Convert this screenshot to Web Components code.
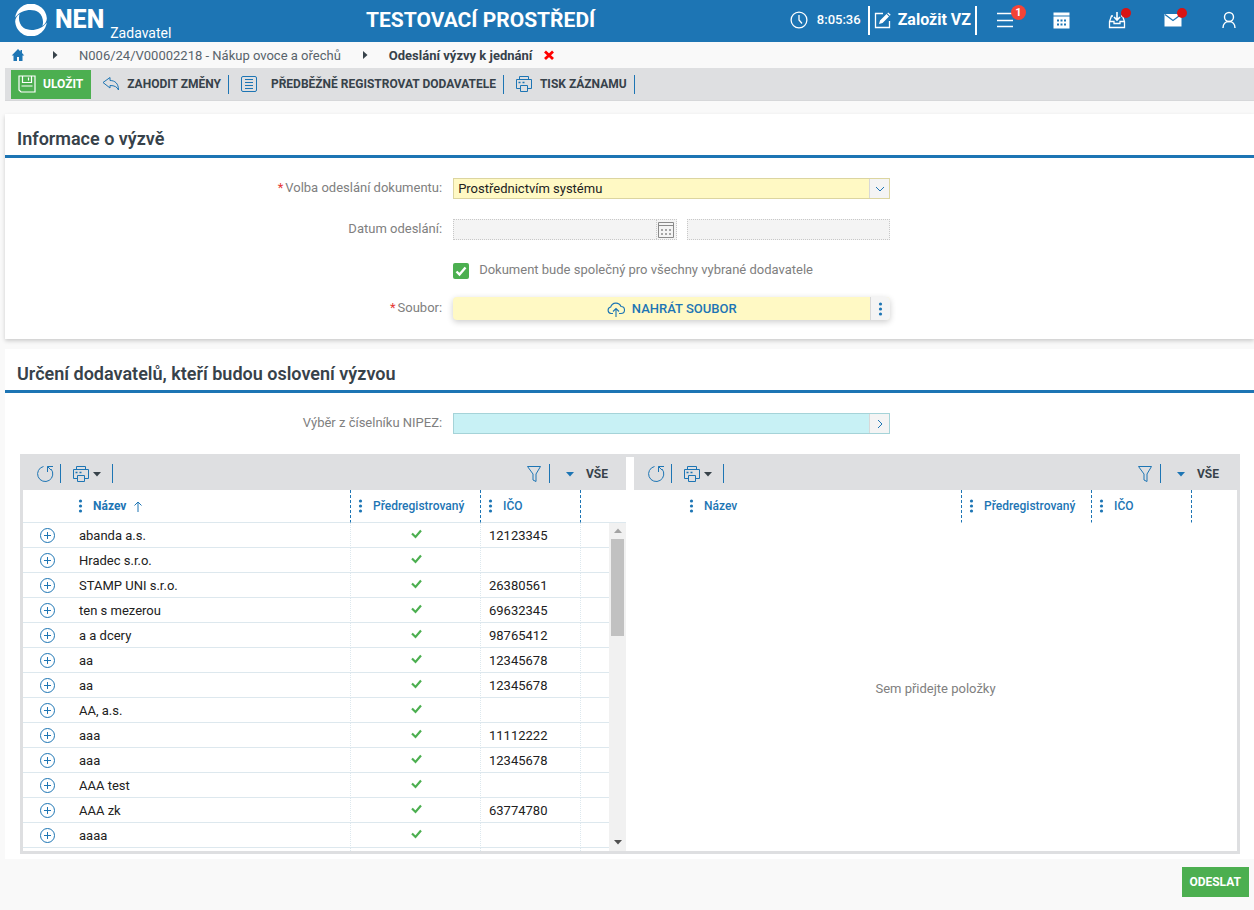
<!DOCTYPE html>
<html lang="cs">
<head>
<meta charset="utf-8">
<title>NEN – Odeslání výzvy k jednání</title>
<style>
  :root {
    --blue: #1d75b4;
    --dark: #37424a;
    --grey: #dedfe1;
    --label: #808080;
    --green: #4caf50;
  }
  body { margin: 0; background: #f9f9f9; font-family: Roboto, "Liberation Sans", sans-serif; font-size: 13px; line-height: 16px; color: var(--dark); }
</style>
</head>
<body>
<nen-app></nen-app>
<script>
const ICONS = {
  logo: [32, '<path id="c" fill="currentColor" d="M31.800 18.500A15.900 15.900 0 0 1 .2 18C0 15 1.500 12 4.600 10C3.200 14 4 20.500 8.500 23.800C14 27.500 25.500 27 31.800 18.500Z"/><path fill="currentColor" transform="rotate(180 16 16)" d="M31.800 18.500A15.900 15.900 0 0 1 .2 18C0 15 1.500 12 4.600 10C3.200 14 4 20.500 8.500 23.800C14 27.500 25.500 27 31.800 18.500Z"/>'],
  clock: [18, '<g fill="none" stroke="currentColor" stroke-width="1.300"><circle cx="9" cy="9" r="7.900"/><path d="M9 4v5l3 3.500"/></g>'],
  edit: [17, '<path d="M9 1.500H1.500v14h14V9" fill="none" stroke="currentColor" stroke-width="1.300"/><path fill="currentColor" d="M5 12l1-3.500L12.500 2 15 4.500 8.500 11zM13.200 1.300l1-.9 2.500 2.400-1 1z"/>'],
  menu: [18, '<path d="M1 2.500h16M1 9.500h16M1 15.500h16" fill="none" stroke="currentColor" stroke-width="1.500"/>'],
  calendar: [17, '<path fill="currentColor" d="M.5.500h16v3H.5z"/><path fill="currentColor" fill-rule="evenodd" d="M.5 4.500h16v12H.5zM4 7.500v2h2v-2zM7.500 7.500v2h2v-2zM11 7.500v2h2v-2zM4 11.500v2h2v-2zM7.500 11.500v2h2v-2zM11 11.500v2h2v-2z"/>'],
  inbox: [18, '<g fill="none" stroke="currentColor" stroke-width="1.300"><path d="M5 5H3.500L1.500 10.500v6h15v-6L14.500 5H13M1.500 10.500H6v2h6v-2h4.500"/><path d="M9 1v7.500M6 6l3 3 3-3" stroke-width="1.600"/></g>'],
  mail: [18, '<path fill="currentColor" d="M.5 3h17v12.500H.5z"/><path d="M1 3.500l8 6 8-6" fill="none" stroke="#1d75b4" stroke-width="1.200"/>'],
  user: [18, '<g fill="none" stroke="currentColor" stroke-width="1.400"><circle cx="9" cy="6" r="4.500"/><path d="M3 17c0-4 2.500-6.500 6-6.500s6 2.500 6 6.500"/></g>'],
  home: [14, '<path fill="currentColor" d="M7 1L.7 7.500h1.800V13H6V9h2v4h3.500V7.500h1.800L11 5V2H9.500v1.500z"/>'],
  right: [10, '<path fill="currentColor" d="M3 1l4.500 4L3 9z"/>'],
  close: [12, '<path d="M2 2.500l8 7.500M10 2.500L2 10" stroke="currentColor" stroke-width="2.800" fill="none"/>'],
  save: [18, '<g fill="none" stroke="currentColor" stroke-width="1.200"><path d="M1 1h16v16H3l-2-2zM4.500 1v6.500h9V1M10.500 2.500v3M3.500 11h11" /></g>'],
  back: [18, '<path d="M1 7.500L8 2.500v3c5 0 8.500 3 8.500 9.500-1.500-3.200-4-4.500-8.500-4.500V13z" fill="none" stroke="currentColor" stroke-linejoin="round"/>'],
  list: [18, '<g fill="none" stroke="currentColor"><rect x="1.500" y="1.500" width="15" height="15" rx="1.500"/><path d="M5 4.500h8M5 7.500h8M5 10.500h8M5 13.500h8"/></g>'],
  print: [18, '<g fill="none" stroke="currentColor"><path d="M4.500 4.500v-3h9v3M5 13.500H1.500v-9h15v9H13"/><path d="M5.500 10.500h7v6h-7z"/><path d="M3.500 7.500h2M7.500 7.500h2" stroke-width="1.500"/></g>'],
  cloud: [18, '<g fill="none" stroke="currentColor" stroke-width="1.100"><path d="M6 13.500H4a3.300 3.300 0 0 1-.3-6.500A5.500 5.500 0 0 1 14 6.500a3.500 3.500 0 0 1 0 7h-2M9 17V8.500M6 11.500l3-3 3 3"/></g>'],
  dots: [16, '<g fill="currentColor"><circle cx="7.500" cy="3" r="1.600"/><circle cx="7.500" cy="8" r="1.600"/><circle cx="7.500" cy="13" r="1.600"/></g>'],
  down: [14, '<path d="M3 5l4 4 4-4" fill="none" stroke="currentColor"/>'],
  next: [14, '<path d="M5 3l4 4-4 4" fill="none" stroke="currentColor"/>'],
  date: [16, '<g fill="none" stroke="currentColor"><path d="M.5.500h15v15H.5zM.5 3.500h15"/><path d="M3 8h10M3 12h10" stroke-width="1.600" stroke-dasharray="2 2"/></g>'],
  check: [16, '<path d="M3.500 8.500l3 3 6-7" fill="none" stroke="currentColor" stroke-width="2.400"/>'],
  tick: [12, '<path d="M1 5.500l3.500 3.500L10 2.500" fill="none" stroke="currentColor" stroke-width="2.200"/>'],
  refresh: [18, '<g fill="none" stroke="currentColor"><path d="M7.500 1.500A7.600 7.600 0 1 0 15 4"/><path d="M17 1.500h-5.500v5.500M11.500 1.500L15 5"/></g>'],
  caret: [10, '<path fill="currentColor" d="M1 3h8L5 7.500z"/>'],
  filter: [18, '<path d="M2.500 1.500h13L11 9v7.500L8 15V9z" fill="none" stroke="currentColor"/>'],
  up: [12, '<path d="M6 12V2M2.500 5.500L6 2l3.500 3.500" fill="none" stroke="currentColor"/>'],
  plus: [16, '<g fill="none" stroke="currentColor"><circle cx="7.500" cy="8.500" r="7"/><path d="M4 8.500h7M7.500 5v7"/></g>']
};

function define(name, css, html) {
  const t = document.createElement('template');
  t.innerHTML = '<style>*{box-sizing:border-box}button{font:inherit;color:inherit;background:none;border:0;margin:0;padding:0;display:flex;align-items:center}' + css + '</style>' + html;
  customElements.define(name, class extends HTMLElement {
    constructor() {
      super();
      this.attachShadow({ mode: 'open' }).append(t.content.cloneNode(true));
    }
  });
}

customElements.define('nen-icon', class extends HTMLElement {
  connectedCallback() {
    if (this.shadowRoot) return;
    const [size, body] = ICONS[this.getAttribute('name')];
    this.attachShadow({ mode: 'open' }).innerHTML =
      `<style>:host{display:block;flex:none}svg{display:block}</style><svg width="${size}" height="${size}" viewBox="0 0 ${size} ${size}" aria-hidden="true">${body}</svg>`;
  }
});

define('nen-divider', ':host{display:block;flex:none;width:1px;height:19px;background:var(--line,var(--blue))}', '');

define('nen-header', `
  :host{display:flex;align-items:center;height:42px;padding-bottom:2px;box-sizing:border-box;background:var(--blue);color:#fff}
  .logo{display:flex;align-items:center;color:#fff;text-decoration:none;padding-left:15px;height:40px}
  .name{font-size:25px;line-height:40px;font-weight:800;margin-left:8px}
  .role{font-size:14px;line-height:14px;align-self:flex-end;margin-left:6px}
  h1{flex:1;margin:0;text-align:center;font-size:21px;line-height:24px;font-weight:700}
  .time{display:flex;align-items:center;gap:9px;font-weight:500;margin-right:7px}
  .new{border:solid #fff;border-width:0 2px;height:29px;padding:0 4px;gap:7px;font-size:16px;font-weight:700}
  nav{display:flex;gap:6px;margin-left:3px}
  nav button{position:relative;width:50px;height:40px;justify-content:center}
  .badge{position:absolute;left:31px;top:5px;width:15px;height:15px;border-radius:8px;background:#f44336;font-size:11px;line-height:15px;font-weight:700;text-align:center}
  .dot{position:absolute;left:29px;top:8px;width:10px;height:10px;border-radius:5px;background:#d81414}
`, `
  <a class="logo" href="#" aria-label="NEN Zadavatel"><nen-icon name="logo"></nen-icon><span class="name">NEN</span><span class="role">Zadavatel</span></a>
  <h1>TESTOVACÍ PROSTŘEDÍ</h1>
  <div class="time"><nen-icon name="clock"></nen-icon><span>8:05:36</span></div>
  <button class="new" type="button"><nen-icon name="edit"></nen-icon>Založit VZ</button>
  <nav>
    <button type="button" aria-label="Menu"><nen-icon name="menu"></nen-icon><span class="badge">1</span></button>
    <button type="button" aria-label="Kalendář"><nen-icon name="calendar"></nen-icon></button>
    <button type="button" aria-label="Doručené"><nen-icon name="inbox"></nen-icon><span class="dot"></span></button>
    <button type="button" aria-label="Zprávy"><nen-icon name="mail"></nen-icon><span class="dot"></span></button>
    <button type="button" aria-label="Uživatel"><nen-icon name="user"></nen-icon></button>
  </nav>
`);

define('nen-breadcrumb', `
  :host{display:block}
  nav{display:flex;align-items:center;height:26px;padding-left:11px;font-size:13px}
  a{color:inherit;text-decoration:none}
  a.home{color:var(--blue);margin-right:25px}
  a.path{margin:0 19px;color:#58636b}
  b{font-weight:700;margin:0 11px 0 19px}
  a.path,b{padding-top:1px}
  button{color:#f00}
`, `
  <nav aria-label="Cesta">
    <a class="home" href="#" aria-label="Domů"><nen-icon name="home"></nen-icon></a>
    <nen-icon name="right"></nen-icon>
    <a class="path" href="#">N006/24/V00002218 - Nákup ovoce a ořechů</a>
    <nen-icon name="right"></nen-icon>
    <b>Odeslání výzvy k jednání</b>
    <button type="button" aria-label="Zavřít"><nen-icon name="close"></nen-icon></button>
  </nav>
`);

define('nen-actions', `
  :host{display:flex;align-items:center;height:33px;box-sizing:border-box;margin-left:5px;padding-left:6px;background:var(--grey);border-bottom:1px solid #d6d7d9;font-size:12px;font-weight:700}
  button{height:29px;gap:7px;padding:0 7px 0 11px;color:var(--dark)}
  button nen-icon{color:var(--blue)}
  .primary{background:var(--green);color:#fff;padding:0 8px 0 7px}
  .primary nen-icon{color:#fff}
  .list{gap:13px}
`, `
  <button class="primary" type="button"><nen-icon name="save"></nen-icon>ULOŽIT</button>
  <button type="button"><nen-icon name="back"></nen-icon>ZAHODIT ZMĚNY</button>
  <nen-divider></nen-divider>
  <button class="list" type="button"><nen-icon name="list"></nen-icon>PŘEDBĚŽNĚ REGISTROVAT DODAVATELE</button>
  <nen-divider></nen-divider>
  <button type="button"><nen-icon name="print"></nen-icon>TISK ZÁZNAMU</button>
  <nen-divider></nen-divider>
`);

define('nen-section', `
  :host{display:block;background:#fff}
  h2{margin:0;padding:14px 12px 6px;font-size:18px;line-height:21px;border-bottom:3px solid var(--blue);font-weight:600}
`, '<h2><slot name="title"></slot></h2><slot></slot>');

const FORM_CSS = `
  .row{display:grid;grid-template-columns:35% 35%;column-gap:11px;align-items:center;height:41px}
  .lab,.tick>span:last-child{padding-bottom:2px}
  .lab{text-align:right;color:var(--label)}
  .lab i{font-style:normal;color:#e53935;margin-right:2px}
  .box{display:flex;height:21px;border:1px solid #dcd5a0;background:#fff9c4}
  .box input,.box select{flex:1;min-width:0;border:0;background:none;padding:0 4px;font:inherit;color:#212121;appearance:none;outline:0;opacity:1}
  .end{width:20px;flex:none;display:flex;align-items:center;justify-content:center;background:#f4f4f4;border-left:1px solid #d8d8d8;color:var(--blue)}
`;

define('nen-call-form', `
  :host{display:block;padding:10px 0 13px}` + FORM_CSS + `
  .dates{display:grid;grid-template-columns:224fr 204fr;gap:10px}
  .dates .box{border:1px dotted #c8c8c8;background:#f4f4f4}
  .dates .end{border-left:1px dotted #c8c8c8;color:#8a8a8a}
  .row.short{height:35px}
  .tick{display:flex;align-items:center;gap:10px;color:var(--label)}
  .mark{position:relative;width:16px;height:16px;border-radius:2px;background:var(--green);color:#fff}
  .mark input{position:absolute;inset:0;margin:0;width:16px;height:16px;opacity:0}
  .file{display:flex;height:23px;border-radius:4px;overflow:hidden;background:#fff9c4;color:var(--blue);box-shadow:0 2px 6px rgba(0,0,0,.2);font-weight:500}
  .up{flex:1;justify-content:center;gap:7px;padding-left:20px}
  .more{width:20px;justify-content:center;background:#f4f4f4;border-left:1px solid #d8d8d8}
`, `
  <div class="row">
    <label class="lab" for="mode"><i>*</i>Volba odeslání dokumentu:</label>
    <div class="box"><select id="mode"><option>Prostřednictvím systému</option></select><span class="end"><nen-icon name="down"></nen-icon></span></div>
  </div>
  <div class="row">
    <label class="lab" for="date">Datum odeslání:</label>
    <div class="dates">
      <div class="box"><input id="date" type="text" disabled><span class="end"><nen-icon name="date"></nen-icon></span></div>
      <div class="box"><input type="text" aria-label="Čas odeslání" disabled></div>
    </div>
  </div>
  <div class="row">
    <span></span>
    <label class="tick"><span class="mark"><nen-icon name="check"></nen-icon><input type="checkbox" checked></span><span>Dokument bude společný pro všechny vybrané dodavatele</span></label>
  </div>
  <div class="row short">
    <label class="lab" for="file"><i>*</i>Soubor:</label>
    <div class="file"><button class="up" id="file" type="button"><nen-icon name="cloud"></nen-icon>NAHRÁT SOUBOR</button><button class="more" type="button" aria-label="Další"><nen-icon name="dots"></nen-icon></button></div>
  </div>
`);

define('nen-picker', `
  :host{display:block;padding:10px 0 0}` + FORM_CSS + `
  .box{background:#c8f1f5;border-color:#a5d3d8}
`, `
  <div class="row">
    <label class="lab" for="nipez">Výběr z číselníku NIPEZ:</label>
    <div class="box"><input id="nipez" type="text"><button class="end" type="button" aria-label="Vybrat"><nen-icon name="next"></nen-icon></button></div>
  </div>
`);

define('nen-scrollbar', `
  :host{position:absolute;right:0;top:66px;bottom:0;width:17px;background:#f1f1f1;display:flex;flex-direction:column;align-items:center;justify-content:space-between}
  nen-icon{color:#505050;margin-bottom:4px}
  .top{color:#a3a3a3;margin:3px 0;transform:rotate(180deg)}
  .thumb{width:13px;height:97px;background:#c1c1c1}
  .track{flex:1}
`, '<nen-icon class="top" name="caret"></nen-icon><span class="thumb"></span><span class="track"></span><nen-icon name="caret"></nen-icon>');

const GRID_CSS = `
  *{box-sizing:border-box}
  :host{display:flex;flex-direction:column;position:relative;height:394px;overflow:hidden;background:#fff}
  button{font:inherit;color:inherit;background:none;border:0;margin:0;padding:0;display:flex;align-items:center}
  .bar{display:flex;align-items:center;height:33px;flex:none;padding:0 18px 0 13px;background:var(--grey);color:var(--blue)}
  .bar .print{padding:0 10px 0 11px;gap:2px}
  .bar .print .c{color:var(--dark)}
  .bar .fresh{padding-right:6px}
  .bar .fil{margin-left:auto;padding-right:6px}
  .bar .all{font-size:12px;font-weight:700;padding-left:15px;gap:11px}
  .bar .all span{color:var(--dark)}
  table{width:100%;table-layout:fixed;border-collapse:separate;border-spacing:0}
  th,td{padding:0 0 0 8px;text-align:left;border-left:1px dotted #dde8ee;white-space:nowrap}
  th:first-child,td:first-child{border-left:0}
  th{height:33px;font-size:12px;font-weight:500;color:var(--blue);border-left:1px dashed var(--blue);border-bottom:1px solid #fff}
  th div{display:flex;align-items:center}
  th:first-child{padding-left:50px}
  th nen-icon[name=dots]{margin:0 4px 0 -6px}
  th:first-child nen-icon[name=dots]{margin-left:0}
  th nen-icon[name=up]{margin-left:6px}
  th.sorted{font-weight:700}
  .full th{border-bottom-color:#dde8ee}
  tbody tr:not(.tail) td{height:25px;border-bottom:1px solid #dde8ee;color:#212121;padding-top:2px}
  .tail td{height:3px}
  td:first-child div{display:flex;align-items:center;gap:23px;padding-left:9px}
  td button{color:var(--blue);padding-bottom:2px}
  td nen-icon[name=tick]{width:12px;margin:0 auto;color:var(--green)}
  tbody tr:not(.tail) td.mid{padding:0 0 2px 2px}
  .empty{flex:1;display:flex;align-items:center;justify-content:center;color:var(--label);margin:0;padding-top:4px}
`;

customElements.define('nen-supplier-grid', class extends HTMLElement {
  connectedCallback() {
    if (this.shadowRoot) return;
    const rows = this.hasAttribute('sorted') ? SUPPLIERS : [];
    const full = rows.length > 0;
    const body = rows.map(([name, id]) => `<tr><td><div><button type="button" aria-label="Přidat"><nen-icon name="plus"></nen-icon></button><span>${name}</span></div></td><td class="mid"><nen-icon name="tick"></nen-icon></td><td>${id}</td><td></td></tr>`).join('');
    this.attachShadow({ mode: 'open' }).innerHTML = `<style>${GRID_CSS}</style>
      <div class="bar">
        <button class="fresh" type="button" aria-label="Obnovit"><nen-icon name="refresh"></nen-icon></button><nen-divider></nen-divider>
        <button class="print" type="button" aria-label="Tisk"><nen-icon name="print"></nen-icon><nen-icon class="c" name="caret"></nen-icon></button><nen-divider></nen-divider>
        <button class="fil" type="button" aria-label="Filtr"><nen-icon name="filter"></nen-icon></button><nen-divider></nen-divider>
        <button class="all" type="button"><nen-icon name="caret"></nen-icon><span>VŠE</span></button>
      </div>
      <table class="${full ? 'full' : ''}">
        <colgroup><col><col style="width:130px"><col style="width:100px"><col style="width:46px"></colgroup>
        <thead><tr>
          <th class="${full ? 'sorted' : ''}"><div><nen-icon name="dots"></nen-icon>Název${full ? '<nen-icon name="up"></nen-icon>' : ''}</div></th>
          <th><div><nen-icon name="dots"></nen-icon>Předregistrovaný</div></th>
          <th><div><nen-icon name="dots"></nen-icon>IČO</div></th>
          <th></th>
        </tr></thead>
        ${full ? `<tbody>${body}<tr class="tail"><td></td><td></td><td></td><td></td></tr></tbody>` : ''}
      </table>
      ${full ? '<nen-scrollbar></nen-scrollbar>' : '<p class="empty">Sem přidejte položky</p>'}`;
  }
});

define('nen-transfer', `
  :host{display:grid;grid-template-columns:1fr 1fr;gap:8px;margin:10px 14px 0 15px;border:3px solid var(--grey)}
`, '<slot></slot>');

define('nen-submit', `
  :host{display:flex;justify-content:flex-end;padding:8px 5px 13px}
  button{height:30px;padding:0 8px 0 7px;background:var(--green);color:#fff;font-size:12px;font-weight:700}
`, '<button type="submit"><slot></slot></button>');

const SUPPLIERS = [
  ['abanda a.s.', '12123345'], ['Hradec s.r.o.', ''], ['STAMP UNI s.r.o.', '26380561'], ['ten s mezerou', '69632345'],
  ['a a dcery', '98765412'], ['aa', '12345678'], ['aa', '12345678'], ['AA, a.s.', ''], ['aaa', '11112222'],
  ['aaa', '12345678'], ['AAA test', ''], ['AAA zk', '63774780'], ['aaaa', '']
];

define('nen-app', `
  :host{display:block}
  main{padding-top:13px}
  nen-section{margin-left:5px}
  .call{box-shadow:0 2px 4px rgba(0,0,0,.18);margin-bottom:10px}
  .suppliers{padding-bottom:5px}
`, `
  <nen-header></nen-header>
  <nen-breadcrumb></nen-breadcrumb>
  <nen-actions></nen-actions>
  <main>
    <nen-section class="call"><span slot="title">Informace o výzvě</span><nen-call-form></nen-call-form></nen-section>
    <nen-section class="suppliers"><span slot="title">Určení dodavatelů, kteří budou oslovení výzvou</span>
      <nen-picker></nen-picker>
      <nen-transfer><nen-supplier-grid sorted></nen-supplier-grid><nen-supplier-grid></nen-supplier-grid></nen-transfer>
    </nen-section>
  </main>
  <nen-submit>ODESLAT</nen-submit>
`);
</script>
</body>
</html>
